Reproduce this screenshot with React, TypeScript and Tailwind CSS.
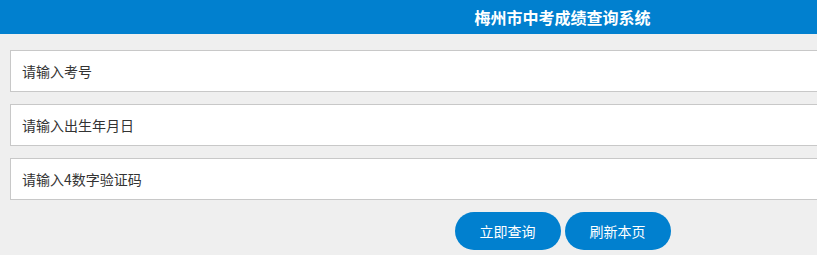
import { useState } from "react";

const fields = [
  { key: "ksh", placeholder: "请输入考号" },
  { key: "csrq", placeholder: "请输入出生年月日" },
  { key: "yzm", placeholder: "请输入4数字验证码" },
];

export default function App() {
  const [values, setValues] = useState<Record<string, string>>({});

  return (
    <div
      className="h-screen w-full overflow-hidden bg-[#efefef]"
      style={{ fontFamily: '"Microsoft YaHei", "Noto Sans CJK SC", sans-serif' }}
    >
      <div className="w-[1125px]">
        <div className="flex h-[34px] items-center justify-center bg-[#0180cf] text-[16px] font-bold text-white">
          梅州市中考成绩查询系统
        </div>

        <div className="flex flex-col gap-3 px-[10px] pt-4">
          {fields.map((f) => (
            <input
              key={f.key}
              type="text"
              value={values[f.key] ?? ""}
              onChange={(e) => setValues({ ...values, [f.key]: e.target.value })}
              placeholder={f.placeholder}
              className="h-[42px] w-full border border-[#c8c8c8] bg-white px-[11px] text-[14px] text-[#333] placeholder:text-[#333] focus:outline-none"
            />
          ))}
        </div>

        <div className="flex justify-center gap-1 pt-3">
          <button
            type="button"
            className="h-[38px] w-[106px] rounded-full bg-[#0180cf] text-[14px] text-white"
          >
            立即查询
          </button>
          <button
            type="button"
            onClick={() => setValues({})}
            className="h-[38px] w-[106px] rounded-full bg-[#0180cf] text-[14px] text-white"
          >
            刷新本页
          </button>
        </div>
      </div>
    </div>
  );
}
